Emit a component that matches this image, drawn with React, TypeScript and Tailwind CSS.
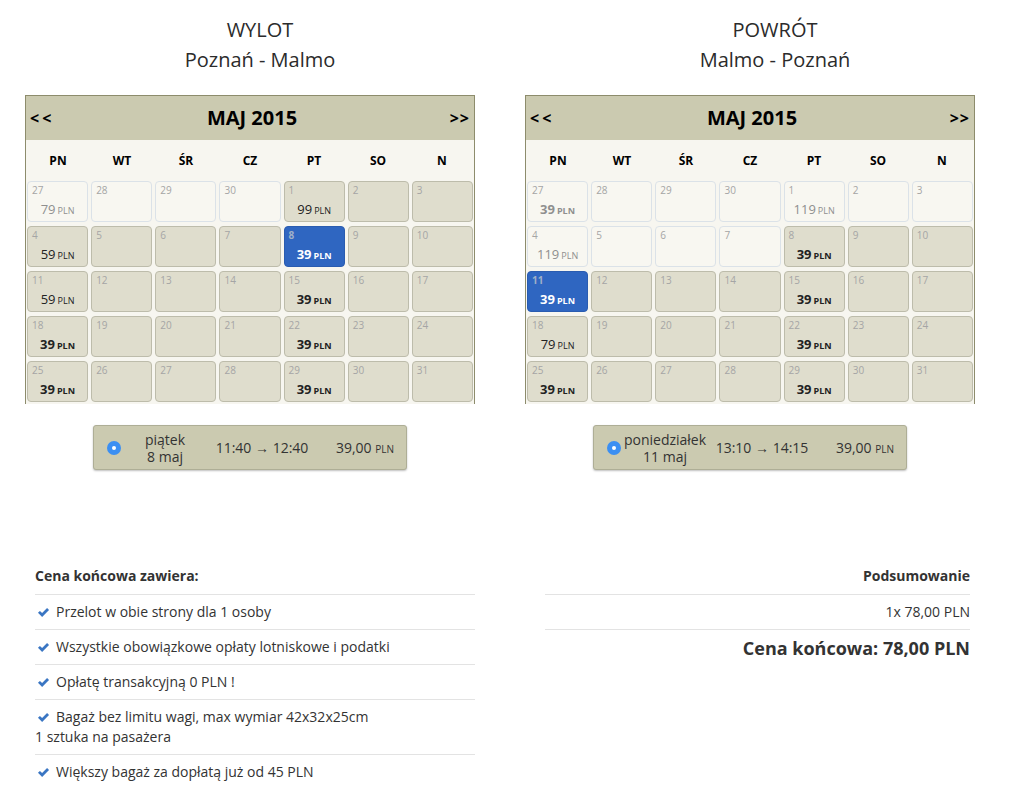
import React from "react";

type Cell = {
  d: number;
  past?: boolean;
  sel?: boolean;
  price?: number;
  bold?: boolean;
};

const DAYS = ["PN", "WT", "ŚR", "CZ", "PT", "SO", "N"];

const outbound: Cell[] = [
  { d: 27, past: true, price: 79 },
  { d: 28, past: true },
  { d: 29, past: true },
  { d: 30, past: true },
  { d: 1, price: 99 },
  { d: 2 },
  { d: 3 },
  { d: 4, price: 59 },
  { d: 5 },
  { d: 6 },
  { d: 7 },
  { d: 8, sel: true, price: 39, bold: true },
  { d: 9 },
  { d: 10 },
  { d: 11, price: 59 },
  { d: 12 },
  { d: 13 },
  { d: 14 },
  { d: 15, price: 39, bold: true },
  { d: 16 },
  { d: 17 },
  { d: 18, price: 39, bold: true },
  { d: 19 },
  { d: 20 },
  { d: 21 },
  { d: 22, price: 39, bold: true },
  { d: 23 },
  { d: 24 },
  { d: 25, price: 39, bold: true },
  { d: 26 },
  { d: 27 },
  { d: 28 },
  { d: 29, price: 39, bold: true },
  { d: 30 },
  { d: 31 },
];

const inbound: Cell[] = [
  { d: 27, past: true, price: 39, bold: true },
  { d: 28, past: true },
  { d: 29, past: true },
  { d: 30, past: true },
  { d: 1, past: true, price: 119 },
  { d: 2, past: true },
  { d: 3, past: true },
  { d: 4, past: true, price: 119 },
  { d: 5, past: true },
  { d: 6, past: true },
  { d: 7, past: true },
  { d: 8, price: 39, bold: true },
  { d: 9 },
  { d: 10 },
  { d: 11, sel: true, price: 39, bold: true },
  { d: 12 },
  { d: 13 },
  { d: 14 },
  { d: 15, price: 39, bold: true },
  { d: 16 },
  { d: 17 },
  { d: 18, price: 79 },
  { d: 19 },
  { d: 20 },
  { d: 21 },
  { d: 22, price: 39, bold: true },
  { d: 23 },
  { d: 24 },
  { d: 25, price: 39, bold: true },
  { d: 26 },
  { d: 27 },
  { d: 28 },
  { d: 29, price: 39, bold: true },
  { d: 30 },
  { d: 31 },
];

function DayCell({ c }: { c: Cell }) {
  const box = c.sel
    ? "bg-[#2f66c1] border-[#2a5cb0]"
    : c.past
    ? "bg-[#f8f7f1] border-[#dbe2e8]"
    : "bg-[#dfddcd] border-[#bdbcab]";
  const priceColor = c.sel
    ? "text-white"
    : c.past
    ? "text-[#8f8f8f]"
    : "text-[#222]";
  return (
    <div className={`relative h-[41px] rounded-[4px] border ${box}`}>
      <span
        className={`absolute left-[4px] top-[1px] text-[10px] leading-[14px] ${
          c.sel ? "text-[#9fb0c8] font-bold" : "text-[#a5a5a5]"
        }`}
      >
        {c.d}
      </span>
      {c.price !== undefined && (
        <div
          className={`absolute left-0 right-0 top-[17px] text-center leading-[18px] ${priceColor}`}
        >
          <span className={`text-[13px] ${c.bold ? "font-bold" : ""}`}>
            {c.price}
          </span>
          <span className={`ml-[2px] text-[9px] ${c.bold ? "font-bold" : ""}`}>
            PLN
          </span>
        </div>
      )}
    </div>
  );
}

function Calendar({ cells }: { cells: Cell[] }) {
  return (
    <div className="w-[450px] border-x border-t border-[#8d8c6c] bg-[#f7f6f0]">
      <div className="flex h-[44px] items-center justify-between bg-[#cbcab0] px-[4px] font-bold text-black">
        <span className="text-[16px] tracking-[3px]">&lt;&lt;</span>
        <span className="text-[20px]">MAJ 2015</span>
        <span className="text-[16px] tracking-[1px]">&gt;&gt;</span>
      </div>
      <div className="grid h-[41px] grid-cols-7 items-center text-center text-[12px] font-bold text-black">
        {DAYS.map((d) => (
          <span key={d}>{d}</span>
        ))}
      </div>
      <div className="grid grid-cols-7 gap-x-[3px] gap-y-[4px] px-[1px] pb-[2px]">
        {cells.map((c, i) => (
          <DayCell key={i} c={c} />
        ))}
      </div>
    </div>
  );
}

function FlightBox({
  day,
  date,
  times,
}: {
  day: string;
  date: string;
  times: string;
}) {
  return (
    <div className="flex h-[45px] w-[314px] items-center rounded-[3px] border border-[#aeae96] bg-[#cbcab0] pl-[13px] pr-[12px] text-[#333] shadow-[0_1px_2px_rgba(0,0,0,0.25)]">
      <span className="flex h-[14px] w-[14px] shrink-0 items-center justify-center rounded-full bg-[#3b8ff2]">
        <span className="h-[4px] w-[4px] rounded-full bg-white" />
      </span>
      <div className="flex w-[88px] shrink-0 flex-col items-center whitespace-nowrap text-[14px] leading-[17px]">
        <span>{day}</span>
        <span>{date}</span>
      </div>
      <span className="w-[106px] shrink-0 whitespace-nowrap text-center text-[14px]">
        {times}
      </span>
      <span className="ml-auto whitespace-nowrap text-[14px]">
        39,00 <span className="text-[10px]">PLN</span>
      </span>
    </div>
  );
}

function Check() {
  return (
    <svg
      viewBox="0 0 16 16"
      className="mr-[6px] inline-block h-[13px] w-[13px] align-[-2px]"
    >
      <path
        d="M1.2 8.4 L3.6 6 L6.3 8.7 L12.4 2.6 L14.8 5 L6.3 13.5 Z"
        fill="#3a76c3"
      />
    </svg>
  );
}

const includes: React.ReactNode[] = [
  <>
    <Check />
    Przelot w obie strony dla 1 osoby
  </>,
  <>
    <Check />
    Wszystkie obowiązkowe opłaty lotniskowe i podatki
  </>,
  <>
    <Check />
    Opłatę transakcyjną 0 PLN !
  </>,
  <>
    <Check />
    Bagaż bez limitu wagi, max wymiar 42x32x25cm
    <br />1 sztuka na pasażera
  </>,
  <>
    <Check />
    Większy bagaż za dopłatą już od 45 PLN
  </>,
];

export default function App() {
  return (
    <div className="min-h-[790px] w-[1021px] bg-white font-['Open_Sans',sans-serif] text-[#333]">
      <div className="flex gap-[50px] pl-[25px] pt-[15px]">
        <div className="flex w-[450px] flex-col items-center">
          <div className="pl-[20px] text-center text-[20px] leading-[30px] text-[#2b2b2b]">
            <div>WYLOT</div>
            <div>Poznań - Malmo</div>
          </div>
          <div className="mt-[20px]">
            <Calendar cells={outbound} />
          </div>
          <div className="mt-[21px]">
            <FlightBox day="piątek" date="8 maj" times="11:40 → 12:40" />
          </div>
        </div>
        <div className="flex w-[450px] flex-col items-center">
          <div className="pl-[50px] text-center text-[20px] leading-[30px] text-[#2b2b2b]">
            <div>POWRÓT</div>
            <div>Malmo - Poznań</div>
          </div>
          <div className="mt-[20px]">
            <Calendar cells={inbound} />
          </div>
          <div className="mt-[21px]">
            <FlightBox day="poniedziałek" date="11 maj" times="13:10 → 14:15" />
          </div>
        </div>
      </div>

      <div className="mt-[96px] flex pl-[35px]">
        <div className="w-[440px] text-[14px] leading-[20px]">
          <div className="pb-[8px] font-bold">Cena końcowa zawiera:</div>
          {includes.map((item, i) => (
            <div key={i} className="border-t border-[#e3e3e3] py-[7px]">
              <span className="pl-[2px]">{item}</span>
            </div>
          ))}
        </div>
        <div className="ml-[70px] w-[425px] text-right text-[14px] leading-[20px]">
          <div className="pb-[8px] font-bold">Podsumowanie</div>
          <div className="border-t border-[#e3e3e3] py-[7px]">1x 78,00 PLN</div>
          <div className="border-t border-[#e3e3e3] pt-[6px] text-[18px] font-bold leading-[24px]">
            Cena końcowa: 78,00 PLN
          </div>
        </div>
      </div>
    </div>
  );
}
